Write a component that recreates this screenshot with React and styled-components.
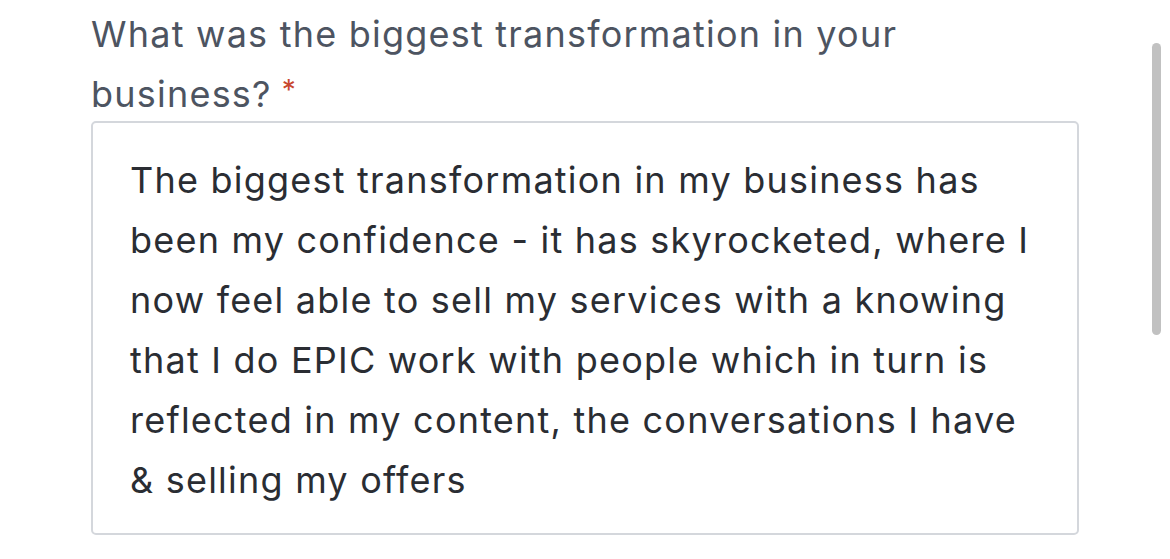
import React from "react";
import styled, { createGlobalStyle } from "styled-components";

const Global = createGlobalStyle`
  html, body { margin: 0; padding: 0; background: #ffffff; overflow: hidden; }
  body { font-family: Inter, "Noto Sans", sans-serif; }
`;

const Page = styled.div`
  position: relative;
  width: 1170px;
  height: 559px;
  box-sizing: border-box;
  padding: 4px 0 0 91px;
`;

const Label = styled.div`
  font-size: 36px;
  line-height: 60px;
  letter-spacing: 1.22px;
  color: #4d5461;
  white-space: nowrap;
`;

const Required = styled.span`
  color: #c8472f;
  margin-left: 10px;
  font-size: 28px;
  line-height: 1;
  vertical-align: 7px;
`;

const Box = styled.div`
  margin-top: -3px;
  width: 988px;
  height: 414px;
  box-sizing: border-box;
  border: 2px solid #d4d7dc;
  border-radius: 5px;
  padding: 27px 0 0 37px;
`;

const Line = styled.div`
  font-size: 36px;
  line-height: 60px;
  letter-spacing: 1.22px;
  color: #2a2d33;
  white-space: nowrap;
`;

const Scrollbar = styled.div`
  position: absolute;
  top: 43px;
  right: 9px;
  width: 9px;
  height: 292px;
  border-radius: 5px;
  background: #c1c1c1;
`;

const lines = [
  "The biggest transformation in my business has",
  "been my confidence - it has skyrocketed, where I",
  "now feel able to sell my services with a knowing",
  "that I do EPIC work with people which in turn is",
  "reflected in my content, the conversations I have",
  "& selling my offers",
];

export default function App() {
  return (
    <>
      <Global />
      <Page>
        <Label>
          What was the biggest transformation in your
          <br />
          business?
          <Required>*</Required>
        </Label>
        <Box>
          {lines.map((l) => (
            <Line key={l}>{l}</Line>
          ))}
        </Box>
        <Scrollbar />
      </Page>
    </>
  );
}
